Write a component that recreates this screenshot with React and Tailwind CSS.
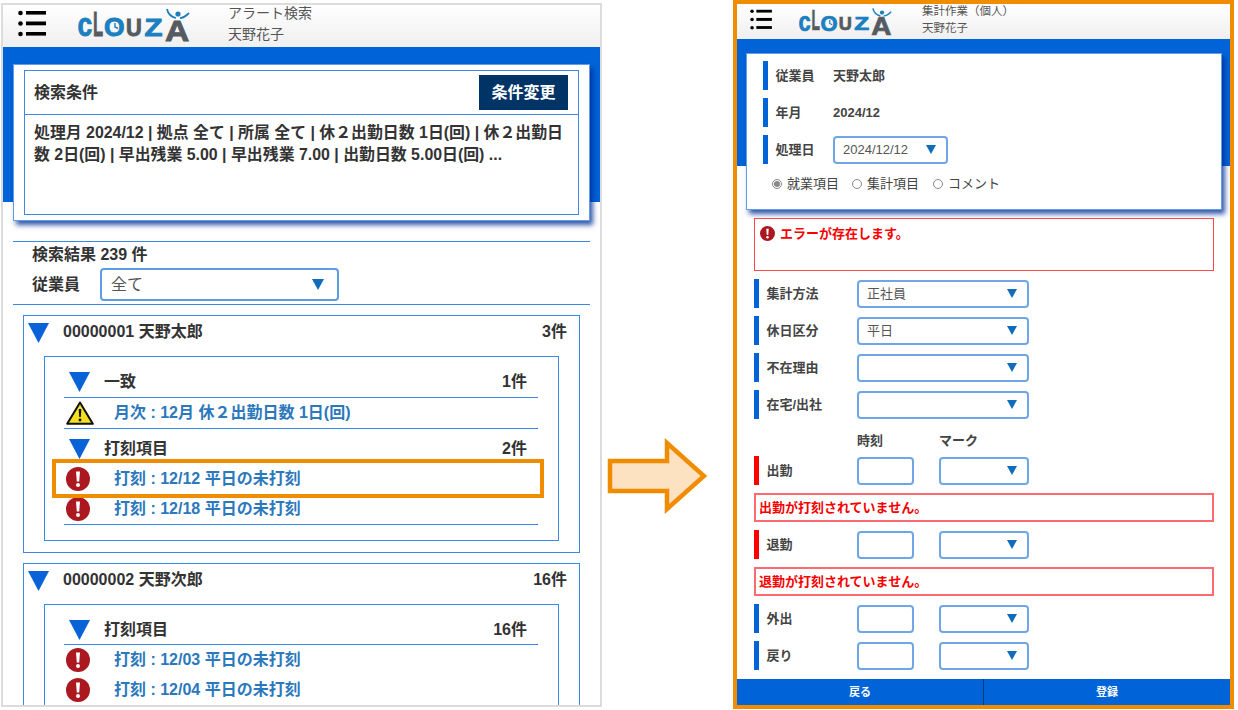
const jpFont = "font-['Liberation_Sans','Noto_Sans_CJK_JP',sans-serif]";

const LogoLetter = ({ x, y, size, sx, fill, children }) => (
  <text transform={`translate(${x} ${y}) scale(${sx} 1)`} fontSize={size} fill={fill} stroke={fill} strokeWidth="0.9">
    {children}
  </text>
);

const Logo = ({ width }) => (
  <svg width={width} height={(width * 52) / 112} viewBox="0 -8 112 52" className="shrink-0">
    <g fontFamily="Liberation Sans, sans-serif" fontWeight="700">
      <LogoLetter x={-0.5} y={28} size={33} sx={0.8} fill="#1b7fc0">c</LogoLetter>
      <LogoLetter x={15} y={27.5} size={36} sx={0.46} fill="#555b60">L</LogoLetter>
      <LogoLetter x={26} y={28} size={26} sx={1.02} fill="#1b7fc0">O</LogoLetter>
      <LogoLetter x={48} y={27.5} size={23} sx={0.95} fill="#555b60">U</LogoLetter>
      <LogoLetter x={66.5} y={27.5} size={23} sx={1.28} fill="#1b7fc0">Z</LogoLetter>
      <LogoLetter x={87} y={33} size={30} sx={1.12} fill="#555b60">A</LogoLetter>
    </g>
    <path d="M37 15v4l3 1.5" fill="none" stroke="#1b7fc0" strokeWidth="1.4" />
    <circle cx="100" cy="6" r="2.6" fill="#1b7fc0" />
    <path d="M89 1c1 5 5 8 9 9M111 5c-3 3-6 5-9 5" fill="none" stroke="#1b7fc0" strokeWidth="1.8" />
  </svg>
);

const Hamburger = ({ small }) => (
  <svg width={small ? 22 : 28} height={small ? 21 : 27} viewBox="0 0 28 27" className="shrink-0">
    <g fill="#000">
      <circle cx="2.5" cy="3" r="2.3" />
      <circle cx="2.5" cy="13.5" r="2.3" />
      <circle cx="2.5" cy="24" r="2.3" />
      <rect x="8" y="1" width="20" height="3.6" />
      <rect x="8" y="11.5" width="20" height="3.8" />
      <rect x="8" y="22" width="20" height="3.6" />
    </g>
  </svg>
);

const BlueTriangle = ({ className = '' }) => (
  <svg width="21" height="20" viewBox="0 0 21 20" className={`shrink-0 ${className}`}>
    <polygon points="0,0 21,0 10.5,20" fill="#0a62d8" />
  </svg>
);

const SelectArrow = ({ big }) => (
  <svg width={big ? 12 : 10} height={big ? 11 : 9} viewBox="0 0 10 9" className="shrink-0">
    <polygon points="0,0 10,0 5,9" fill="#0f6dbb" />
  </svg>
);

const ErrorIcon = ({ size = 24 }) => (
  <svg width={size} height={size} viewBox="0 0 24 24" className="shrink-0">
    <circle cx="12" cy="12" r="12" fill="#ab1820" />
    <path d="M10 4.5h4l-.8 10h-2.4z" fill="#fff" />
    <circle cx="12" cy="18" r="2" fill="#fff" />
  </svg>
);

const WarnIcon = () => (
  <svg width="28" height="24" viewBox="0 0 28 24" className="shrink-0">
    <path d="M14 1.5 26.8 22.8H1.2z" fill="#f5e020" stroke="#111" strokeWidth="2" strokeLinejoin="round" />
    <path d="M12.7 8h2.6l-.5 8h-1.6z" fill="#111" />
    <circle cx="14" cy="19" r="1.4" fill="#111" />
  </svg>
);

const Row = ({ icon, children }) => (
  <div className="h-[30px] flex items-center text-[16px] font-bold text-[#2b78bd]">
    <div className="w-[50px] pl-[2px] shrink-0 flex items-center">{icon}</div>
    <span className="whitespace-nowrap">{children}</span>
  </div>
);

const GroupHead = ({ title, count, className }) => (
  <div className={`flex items-center pl-[5px] text-[16px] font-bold text-[#333] ${className}`}>
    <BlueTriangle />
    <span className="ml-[14px]">{title}</span>
    <span className="ml-auto mr-[11px]">{count}</span>
  </div>
);

const EmployeeHead = ({ name, count }) => (
  <div className="h-[40px] pb-[9px] -ml-[16px] flex items-center text-[16px] font-bold text-[#333]">
    <BlueTriangle className="mt-[3px]" />
    <span className="ml-[14px]">{name}</span>
    <span className="ml-auto mr-[12px]">{count}</span>
  </div>
);

function AlertPanel() {
  return (
    <div className="w-[601px] h-[704px] mt-[3px] ml-[1px] shrink-0 border-2 border-[#dcdcdc] overflow-hidden">
      <header className="h-[42px] flex bg-gradient-to-b from-white to-[#efefef]">
        <div className="pl-[15px] pt-[5px]"><Hamburger /></div>
        <div className="ml-[32px] -mt-[5px]"><Logo width={112} /></div>
        <div className="ml-[38px] -mt-[2px] text-[14px] leading-[21px] text-[#555]">
          <div>アラート検索</div>
          <div>天野花子</div>
        </div>
      </header>

      <div className="h-[155px] bg-[#0064d8] pt-[17px] pl-[10px]">
        <div className="w-[577px] h-[157px] bg-white border border-[#5f9de8] pt-[5px] px-[10px] shadow-[3px_4px_5px_rgba(0,45,150,0.8)]">
          <div className="h-[145px] border border-[#3b88e6]">
            <div className="h-[44px] flex items-center justify-between pl-[9px] pr-[10px] border-b border-[#3b88e6]">
              <span className="text-[16px] font-bold text-[#333]">検索条件</span>
              <button className="w-[89px] h-[35px] bg-[#003366] text-white text-[16px] font-bold">条件変更</button>
            </div>
            <div className="pl-[9px] pt-[7px] text-[15.9px] leading-[22px] font-bold text-[#333] whitespace-nowrap">
              <div>処理月 2024/12 | 拠点 全て | 所属 全て | 休２出勤日数 1日(回) | 休２出勤日</div>
              <div>数 2日(回) | 早出残業 5.00 | 早出残業 7.00 | 出勤日数 5.00日(回) ...</div>
            </div>
          </div>
        </div>
      </div>

      <div className="mt-[39px] ml-[10px] w-[577px] h-[64px] border-y border-[#3b88e6] pl-[19px]">
        <div className="h-[26px] flex items-center text-[16px] font-bold text-[#333]">検索結果 239 件</div>
        <div className="flex items-center">
          <span className="w-[68px] text-[16px] font-bold text-[#333]">従業員</span>
          <div className="w-[239px] h-[33px] border-2 border-[#5c9de6] rounded-[4px] flex items-center justify-between pl-[9px] pr-[13px] text-[16px] text-[#555]">
            <span>全て</span>
            <SelectArrow big />
          </div>
        </div>
      </div>

      <div className="mt-[10px] ml-[20px] w-[557px] h-[238px] border border-[#3b88e6] pl-[20px]">
        <EmployeeHead name="00000001 天野太郎" count="3件" />
        <div className="w-[515px] h-[185px] border border-[#3b88e6] pl-[19px] pr-[20px] pt-[8px]">
          <GroupHead title="一致" count="1件" className="h-[33px] pt-[2px] border-b border-[#3b88e6]" />
          <div className="border-b border-[#3b88e6]">
            <Row icon={<WarnIcon />}>月次 : 12月 休２出勤日数 1日(回)</Row>
          </div>
          <GroupHead title="打刻項目" count="2件" className="h-[35px] pt-[5px]" />
          <div className="relative border-b border-[#3b88e6]">
            <div className="absolute -left-[12px] -right-[6px] -top-[5px] h-[39px] border-4 border-[#f08c00]" />
            <Row icon={<ErrorIcon />}>打刻 : 12/12 平日の未打刻</Row>
            <Row icon={<ErrorIcon />}>打刻 : 12/18 平日の未打刻</Row>
          </div>
        </div>
      </div>

      <div className="mt-[10px] ml-[20px] w-[557px] h-[200px] border border-[#3b88e6] pl-[20px]">
        <EmployeeHead name="00000002 天野次郎" count="16件" />
        <div className="w-[515px] h-[160px] border border-[#3b88e6] pl-[19px] pr-[20px] pt-[8px]">
          <GroupHead title="打刻項目" count="16件" className="h-[32px] pt-[2px] border-b border-[#3b88e6]" />
          <Row icon={<ErrorIcon />}>打刻 : 12/03 平日の未打刻</Row>
          <Row icon={<ErrorIcon />}>打刻 : 12/04 平日の未打刻</Row>
        </div>
      </div>
    </div>
  );
}

const SmallSelect = ({ value, className }) => (
  <div className={`h-[28px] border-2 border-[#6ea6e8] rounded-[4px] flex items-center justify-between pl-[8px] pr-[10px] text-[13px] text-[#555] ${className}`}>
    <span>{value}</span>
    <SelectArrow />
  </div>
);

const FieldRow = ({ label, red, children }) => (
  <div className="h-[29px] flex items-center">
    <div className={`w-[4.5px] h-full shrink-0 ${red ? 'bg-[#ff0000]' : 'bg-[#0064d8]'}`} />
    <span className="w-[98.5px] pl-[8px] shrink-0 text-[13px] font-bold text-[#444]">{label}</span>
    {children}
  </div>
);

const TimeRow = ({ label, red }) => (
  <FieldRow label={label} red={red}>
    <div className="w-[57px] h-[28px] border-2 border-[#6ea6e8] rounded-[4px]" />
    <SmallSelect value="" className="w-[90px] ml-[25px]" />
  </FieldRow>
);

const ErrorLine = ({ children }) => (
  <div className="h-[29px] border-2 border-[#ff6a70] flex items-center pl-[3px] text-[13px] font-bold text-[#f80000]">
    {children}
  </div>
);

const Radio = ({ label, checked }) => (
  <div className="flex items-center">
    <span className="w-[10px] h-[10px] rounded-full border border-[#888] flex items-center justify-center shrink-0">
      {checked && <span className="w-[6px] h-[6px] rounded-full bg-[#888]" />}
    </span>
    <span className="ml-[5px] text-[13px] text-[#444]">{label}</span>
  </div>
);

const CardLine = ({ label, className, children }) => (
  <div className={`h-[29px] flex items-center ${className}`}>
    <div className="w-[4.5px] h-full bg-[#0064d8]" />
    <span className="w-[65.5px] pl-[8px] text-[13px] font-bold text-[#444]">{label}</span>
    {children}
  </div>
);

function WorkPanel() {
  return (
    <div className="w-[501px] h-[709px] shrink-0 ml-[26px] border-4 border-[#f08c00] flex flex-col overflow-hidden">
      <header className="h-[35px] shrink-0 flex bg-gradient-to-b from-white to-[#efefef]">
        <div className="pl-[13px] pt-[5px]"><Hamburger small /></div>
        <div className="ml-[27px] -mt-[3px]"><Logo width={93} /></div>
        <div className="ml-[30px] -mt-[1px] text-[11.5px] leading-[17px] text-[#555]">
          <div>集計作業（個人）</div>
          <div>天野花子</div>
        </div>
      </header>

      <div className="h-[127px] shrink-0 bg-[#0064d8] pt-[14px] pl-[9px]">
        <div className="w-[476px] h-[157px] bg-white border border-[#5f9de8] pl-[16px] pt-[7px] shadow-[3px_4px_5px_rgba(0,45,150,0.8)]">
          <CardLine label="従業員">
            <span className="text-[13px] font-bold text-[#444]">天野太郎</span>
          </CardLine>
          <CardLine label="年月" className="mt-[8px]">
            <span className="text-[13px] font-bold text-[#444]">2024/12</span>
          </CardLine>
          <CardLine label="処理日" className="mt-[8px]">
            <SmallSelect value="2024/12/12" className="w-[115px]" />
          </CardLine>
          <div className="mt-[10px] ml-[9px] flex">
            <Radio label="就業項目" checked />
            <div className="ml-[13px]"><Radio label="集計項目" /></div>
            <div className="ml-[14px]"><Radio label="コメント" /></div>
          </div>
        </div>
      </div>

      <div className="mt-[52px] pl-[17px] pr-[16px]">
        <div className="h-[53px] border border-[#ff4850] pl-[5px] pt-[7px] flex items-start text-[13px] font-bold text-[#f80000]">
          <ErrorIcon size={15} />
          <span className="ml-[5px] leading-[15px]">エラーが存在します。</span>
        </div>
        <div className="mt-[8px] flex flex-col gap-[8px]">
          <FieldRow label="集計方法"><SmallSelect value="正社員" className="w-[172px]" /></FieldRow>
          <FieldRow label="休日区分"><SmallSelect value="平日" className="w-[172px]" /></FieldRow>
          <FieldRow label="不在理由"><SmallSelect value="" className="w-[172px]" /></FieldRow>
          <FieldRow label="在宅/出社"><SmallSelect value="" className="w-[172px]" /></FieldRow>
        </div>
        <div className="h-[37px] pl-[103px] flex items-center pt-[6px] text-[13px] font-bold text-[#444]">
          <span className="w-[82px]">時刻</span>
          <span>マーク</span>
        </div>
        <div className="flex flex-col gap-[8px]">
          <TimeRow label="出勤" red />
          <ErrorLine>出勤が打刻されていません。</ErrorLine>
          <TimeRow label="退勤" red />
          <ErrorLine>退勤が打刻されていません。</ErrorLine>
          <TimeRow label="外出" />
          <TimeRow label="戻り" />
        </div>
      </div>

      <footer className="mt-auto h-[26px] shrink-0 flex bg-[#0064d8] text-white text-[11px] font-bold">
        <div className="w-[247px] flex items-center justify-center border-r border-[#003a80]">戻る</div>
        <div className="flex-1 flex items-center justify-center">登録</div>
      </footer>
    </div>
  );
}

export default function App() {
  return (
    <div className={`w-[1238px] h-[710px] bg-white flex items-start overflow-hidden ${jpFont}`}>
      <AlertPanel />
      <svg width="100" height="76" viewBox="0 0 100 76" className="shrink-0 ml-[5px] mt-[438px]">
        <polygon points="3,23 60,23 60,5 97,38 60,71 60,53 3,53" fill="#fde2c2" stroke="#f08c00" strokeWidth="4.5" />
      </svg>
      <WorkPanel />
    </div>
  );
}
